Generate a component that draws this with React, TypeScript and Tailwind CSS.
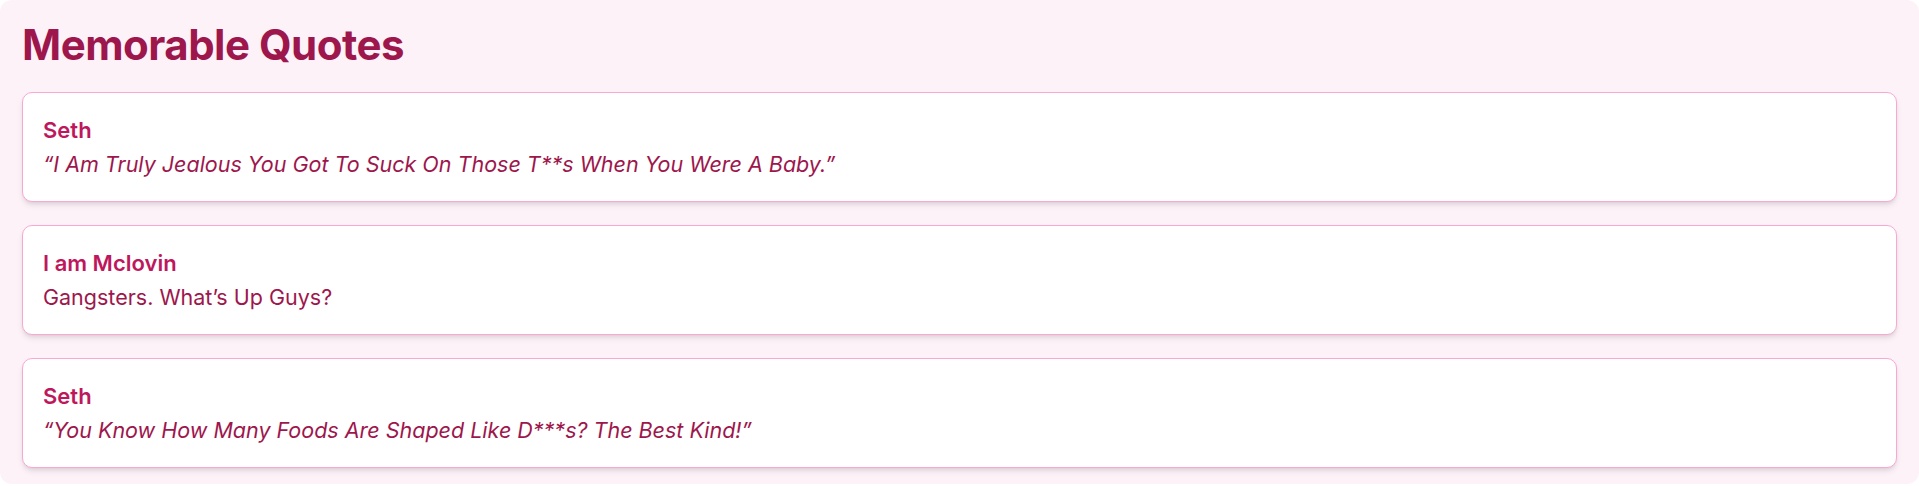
const quotes = [
  { who: "Seth", text: "“I Am Truly Jealous You Got To Suck On Those T**s When You Were A Baby.”", italic: true },
  { who: "I am Mclovin", text: "Gangsters. What’s Up Guys?", italic: false },
  { who: "Seth", text: "“You Know How Many Foods Are Shaped Like D***s? The Best Kind!”", italic: true },
];

export default function App() {
  return (
    <div className="bg-white" style={{ fontFamily: "Inter, 'Noto Sans', sans-serif" }}>
      <div className="bg-[#fdf2f8] rounded-[12px] px-[22px] pt-[20px] pb-[16px]">
        <h1 className="text-[42px] leading-[49px] tracking-[-0.5px] font-bold text-[#9d174d] mb-[23px]">Memorable Quotes</h1>
        <div className="flex flex-col gap-[23px]">
          {quotes.map((q, i) => (
            <div key={i} className="bg-white border border-[#f9a8d4] rounded-[10px] shadow-md p-[20px]">
              <p className="text-[22px] leading-[34px] font-semibold text-[#be185d]">{q.who}</p>
              <p className={`text-[21.5px] leading-[34px] text-[#9d174d] ${q.italic ? "italic" : ""}`}>{q.text}</p>
            </div>
          ))}
        </div>
      </div>
    </div>
  );
}
